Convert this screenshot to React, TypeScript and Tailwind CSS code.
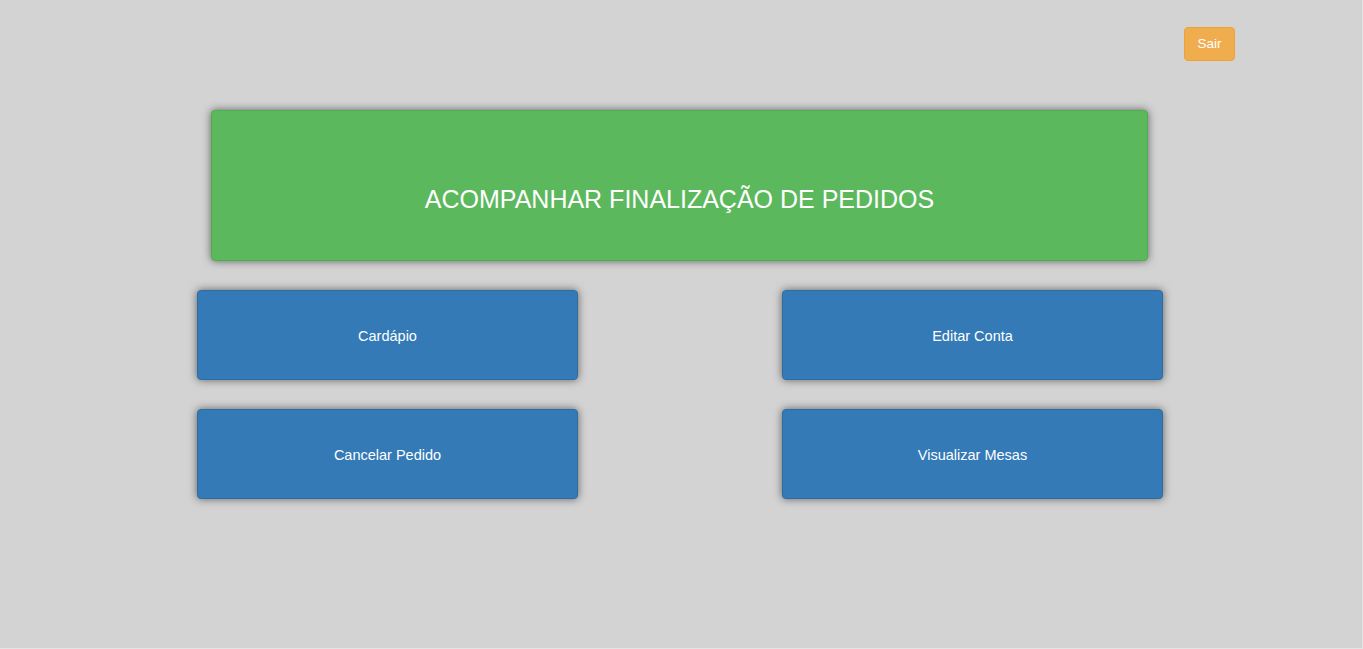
export default function App() {
  return (
    <main className="min-h-[649px] w-full bg-[#d3d3d3] font-['Liberation_Sans',Arial,sans-serif] border-r border-b border-[#e4e4e4]">
      {/* topo com botão sair */}
      <div className="flex justify-end pt-[27px] pr-[127px]">
        <button className="h-[34px] w-[51px] rounded-[4px] bg-[#f0ad4e] text-[13.5px] text-white border border-[#eea236] pt-[1px]">
          Sair
        </button>
      </div>

      <div className="ml-[197px] w-[966px] mt-[49px]">
        <div className="mx-[14px] mr-[15px] h-[151px] rounded-[4px] bg-[#5cb85c] border border-[#4cae4c] shadow-[0_0_8px_rgba(0,0,0,0.55)] flex items-center justify-center">
          <span className="text-[25px] text-white pt-[28px]">ACOMPANHAR FINALIZAÇÃO DE PEDIDOS</span>
        </div>

        <div className="mt-[29px] grid grid-cols-[381px_381px] justify-between gap-y-[29px]">
          {['Cardápio', 'Editar Conta', 'Cancelar Pedido', 'Visualizar Mesas'].map((t) => (
            <button
              key={t}
              className="h-[90px] rounded-[4px] bg-[#337ab7] border border-[#2e6da4] text-white text-[14.5px] pt-[4px] shadow-[0_0_8px_rgba(0,0,0,0.55)]"
            >
              {t}
            </button>
          ))}
        </div>
      </div>
    </main>
  );
}
